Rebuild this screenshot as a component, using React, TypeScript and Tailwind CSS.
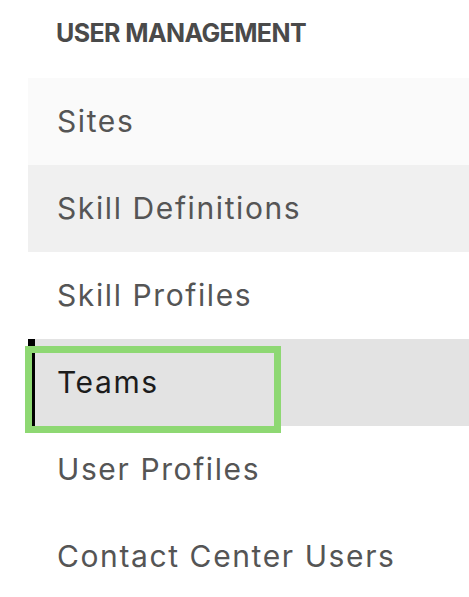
import { twMerge as cn } from 'tailwind-merge'

const items = [
  { label: 'Sites', bg: 'bg-[#fafafa]' },
  { label: 'Skill Definitions', bg: 'bg-[#f0f0f0]' },
  { label: 'Skill Profiles', bg: 'bg-white' },
  { label: 'Teams', bg: 'bg-[#e3e3e3]', active: true },
  { label: 'User Profiles', bg: 'bg-white' },
  { label: 'Contact Center Users', bg: 'bg-white' },
]

export default function App() {
  return (
    <div className="w-[469px] h-[597px] overflow-hidden bg-white font-['Inter',sans-serif]">
      <h2 className="pl-[56px] pt-[16px] h-[78px] text-[25px] font-bold text-[#4a4a4a] leading-[34px] tracking-[-0.6px]">
        USER MANAGEMENT
      </h2>
      <nav className="ml-[28px] flex flex-col">
        {items.map((item) => (
          <div
            key={item.label}
            className={cn(
              'relative flex h-[87px] items-center pl-[29px] text-[30px] tracking-[1.6px]',
              item.bg,
              item.active
                ? 'z-10 border-l-[7px] border-black pl-[22px] text-[#1c1c1c]'
                : 'text-[#555555]'
            )}
          >
            {item.label}
            {item.active && (
              <span className="pointer-events-none absolute left-[-10px] top-[7px] h-[87px] w-[256px] border-[7px] border-[#8ed873]" />
            )}
          </div>
        ))}
      </nav>
    </div>
  )
}
